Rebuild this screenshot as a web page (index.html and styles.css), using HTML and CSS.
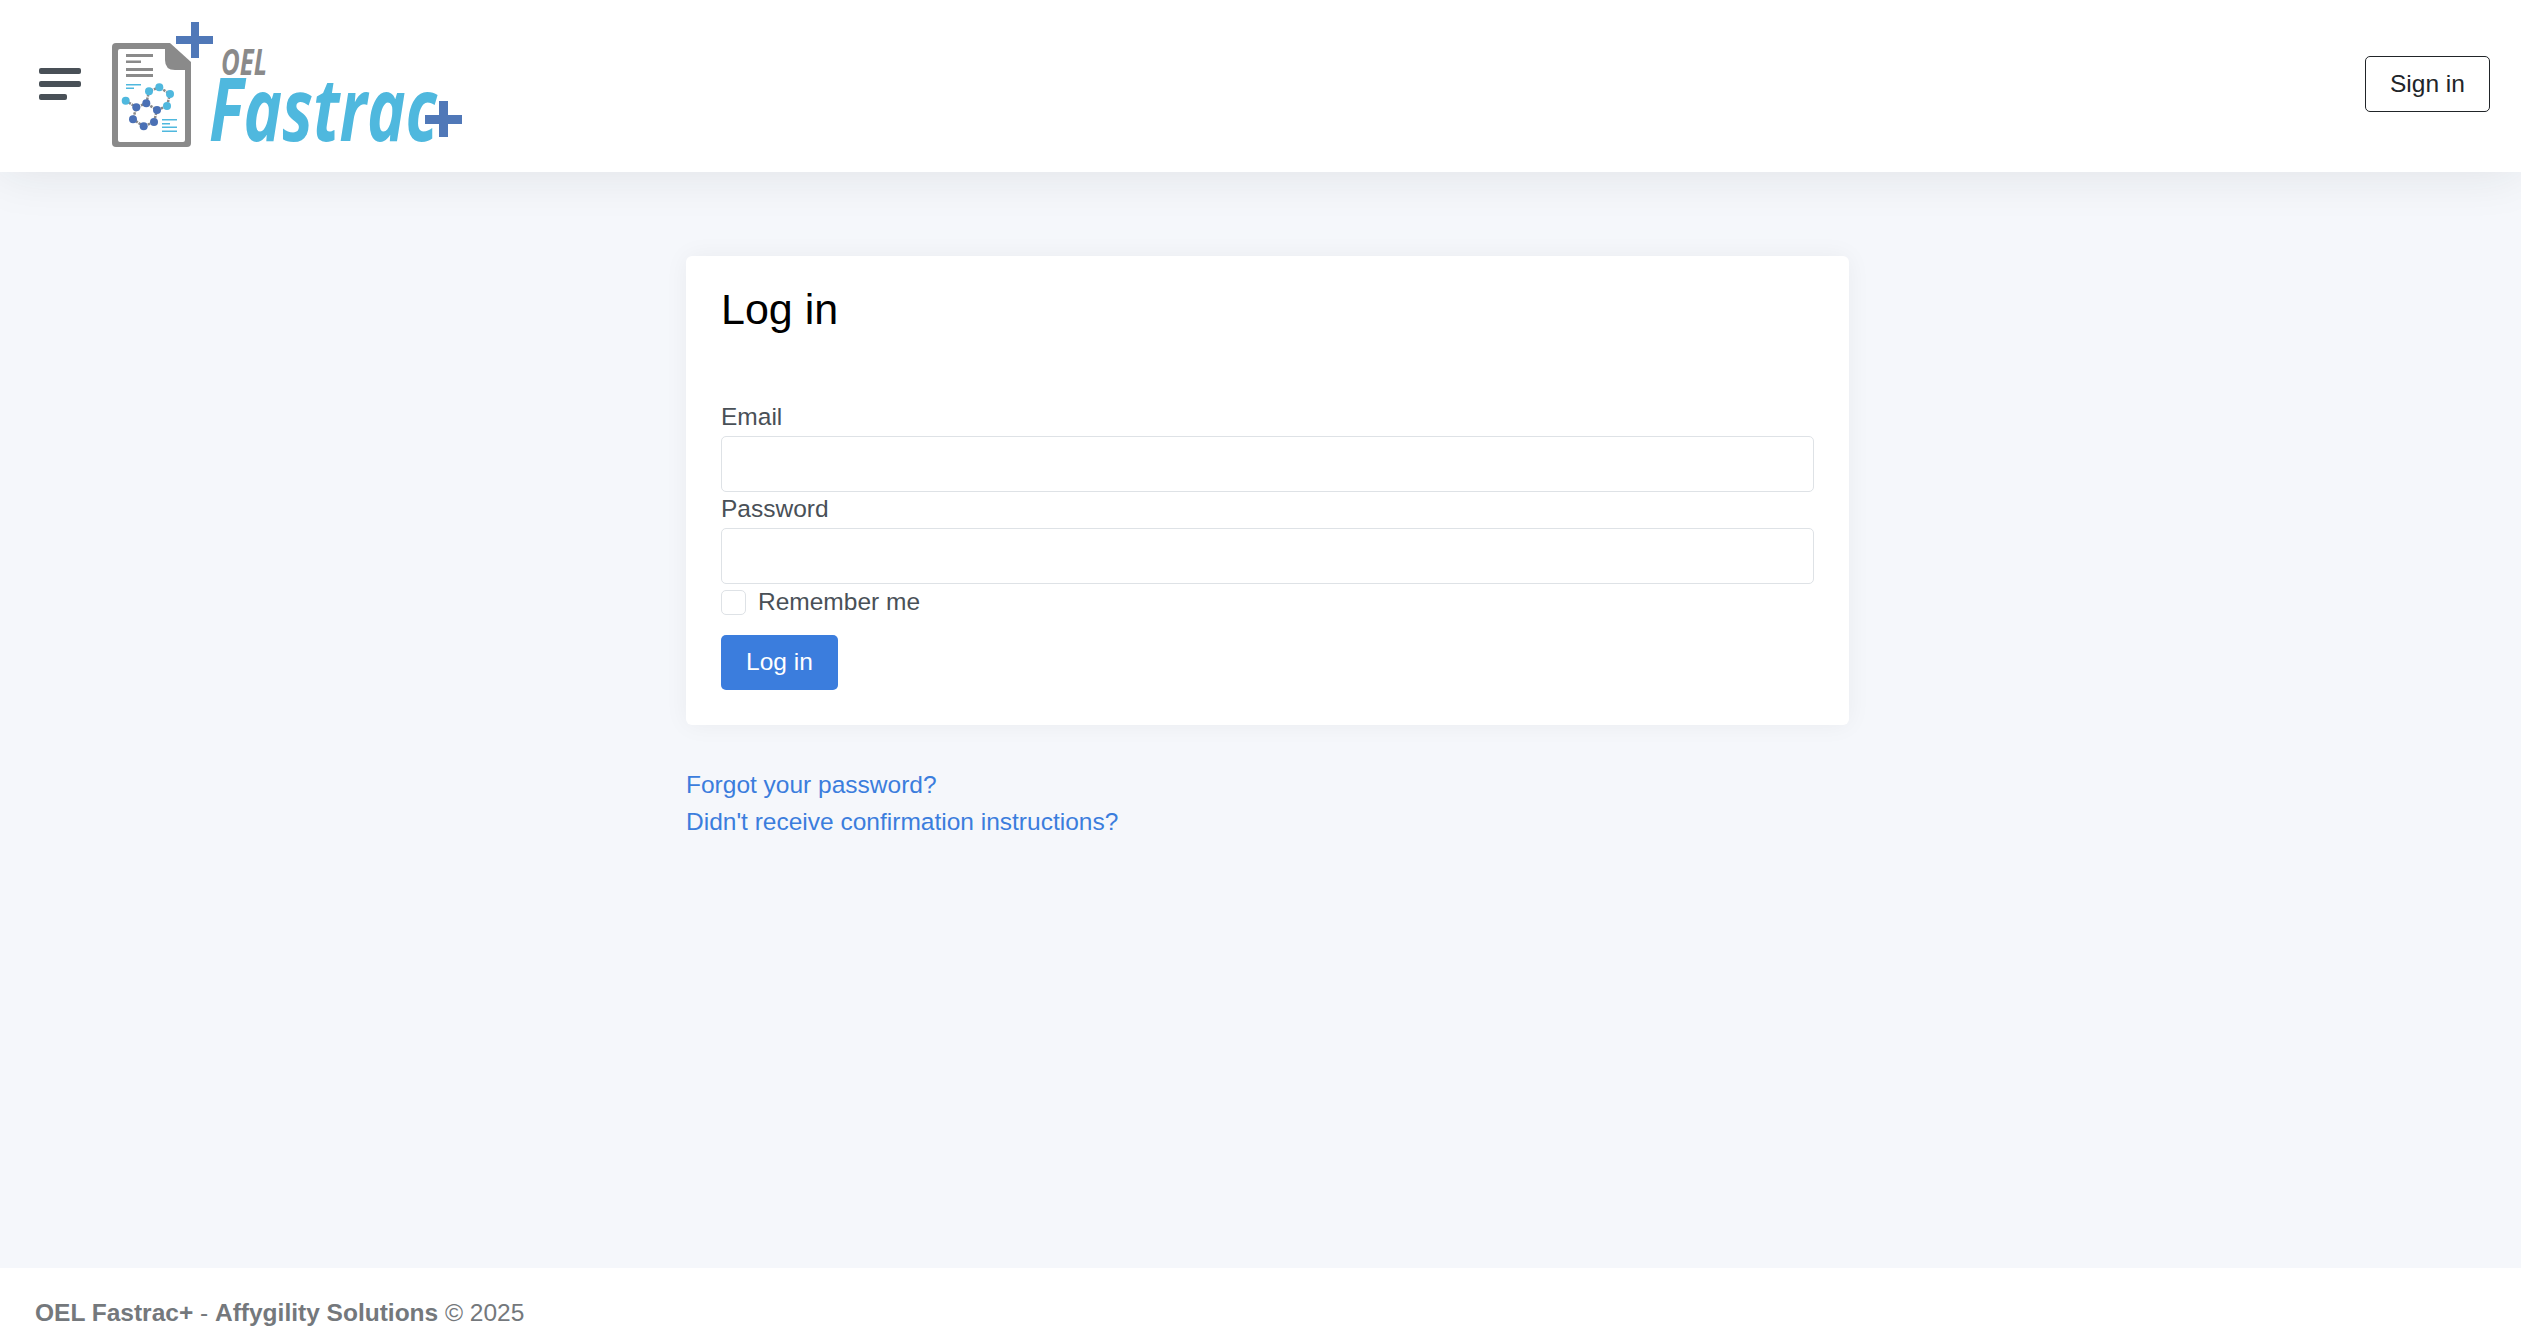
FILE: index.html
```html
<!DOCTYPE html>
<html lang="en">
<head>
    <meta charset="UTF-8">
    <meta name="viewport" content="width=device-width, initial-scale=1.0">
    <title>Log in - OEL Fastrac+</title>
    <link rel="stylesheet" href="styles.css">
</head>
<body>
    <header class="navbar">
        <a class="hamburger" href="#" aria-label="Menu">
            <span class="bar"></span>
            <span class="bar"></span>
            <span class="bar bar--short"></span>
        </a>
        <a class="logo" href="#" aria-label="OEL Fastrac+">
            <svg width="360" height="130" viewBox="108 19 360 130" overflow="visible">
                <!-- document -->
                <path d="M116 43H170L191 62V143Q191 147 187 147H116Q112 147 112 143V47Q112 43 116 43Z" fill="#8a8a8a"/>
                <path d="M120 49H165V60Q165 70 175 70H185V140Q185 142 183 142H120Q118 142 118 140V51Q118 49 120 49Z" fill="#fff"/>
                <g fill="#8a8a8a">
                    <rect x="126" y="54" width="27" height="3"/>
                    <rect x="126" y="60.500" width="15" height="2.500"/>
                    <rect x="126" y="68" width="27" height="3"/>
                    <rect x="126" y="74" width="27" height="3"/>
                </g>
                <g fill="#4fb8de">
                    <rect x="126" y="84" width="15" height="1.500"/>
                    <rect x="126" y="87.500" width="8" height="1.500"/>
                    <rect x="162" y="119" width="15" height="1.500"/>
                    <rect x="162" y="123" width="8" height="1.500"/>
                    <rect x="162" y="126.500" width="15" height="1.500"/>
                    <rect x="162" y="130.500" width="15" height="1.500"/>
                </g>
                <!-- molecule -->
                <path class="bonds" d="M125.700 100.700L136.300 107.300L146.300 103.300L157 110L154 122L143.700 126.300L133 119.300L136.300 107.300M146.300 103.300L149 91.300L159.300 87.300L170 94L167 106L157 110"/>
                <g fill="#4fb8de">
                    <circle cx="125.700" cy="100.700" r="4"/>
                    <circle cx="149" cy="91.300" r="4"/>
                    <circle cx="159.300" cy="87.300" r="4"/>
                    <circle cx="170" cy="94" r="4"/>
                    <circle cx="167" cy="106" r="4"/>
                </g>
                <g fill="#4a70b5">
                    <circle cx="136.300" cy="107.300" r="4"/>
                    <circle cx="146.300" cy="103.300" r="4"/>
                    <circle cx="157" cy="110" r="4"/>
                    <circle cx="154" cy="122" r="4"/>
                    <circle cx="143.700" cy="126.300" r="4"/>
                    <circle cx="133" cy="119.300" r="4"/>
                </g>
                <path d="M191 22H199V36H213V44H199V58H191V44H176V36H191Z" fill="#5078b8"/>
                <!-- wordmark -->
                <text class="logo__oel" x="221" y="75" textLength="46" lengthAdjust="spacingAndGlyphs">OEL</text>
                <text class="logo__name" x="209" y="141" textLength="228" lengthAdjust="spacingAndGlyphs">Fastrac</text>
                <path d="M439 101H448V115H462V124H448V137H439V124H425V115H439Z" fill="#5078b8"/>
            </svg>
        </a>
        <a class="btn btn--outline" href="#">Sign in</a>
    </header>

    <main class="content">
        <div class="card">
            <h1 class="card__title">Log in</h1>
            <form>
                <label class="field__label" for="email">Email</label>
                <input class="field__input" id="email" type="email">
                <label class="field__label" for="password">Password</label>
                <input class="field__input" id="password" type="password">
                <label class="remember">
                    <input class="remember__box" type="checkbox">
                    <span>Remember me</span>
                </label>
                <button class="btn btn--primary" type="button">Log in</button>
            </form>
        </div>
        <div class="links">
            <a href="#">Forgot your password?</a><br>
            <a href="#">Didn't receive confirmation instructions?</a>
        </div>
    </main>

    <footer class="footer">
        <strong>OEL Fastrac+</strong>&nbsp;-&nbsp;<strong>Affygility Solutions</strong>&nbsp;© 2025
    </footer>
</body>
</html>
```

FILE: styles.css
```css
* {
    box-sizing: border-box;
}
html, body {
    height: 100%;
}
body {
    margin: 0;
    display: flex;
    flex-direction: column;
    min-height: 100vh;
    background-color: #f5f7fb;
    color: #495057;
    font-family: "Liberation Sans", Arial, sans-serif;
    font-size: 24.500px;
    line-height: 36px;
}
a {
    color: #3b7ddd;
    text-decoration: none;
}

/* top bar */
.navbar {
    display: flex;
    align-items: center;
    flex-shrink: 0;
    height: 172px;
    padding: 0 31px 4px 39px;
    background-color: #fff;
    box-shadow: 0 0 48px rgba(33, 37, 41, .1);
}
.hamburger {
    display: flex;
    flex-direction: column;
    gap: 7px;
    width: 42px;
    margin-right: 27px;
}
.bar {
    display: block;
    width: 42px;
    height: 6px;
    border-radius: 2px;
    background-color: #495057;
}
.bar--short {
    width: 28px;
}
.logo {
    display: flex;
}
.logo__oel {
    fill: #8a8a8a;
    font-family: "Open Sans", sans-serif;
    font-size: 35px;
    font-style: italic;
    font-weight: 700;
}
.logo__name {
    fill: #4fb8de;
    font-family: "Open Sans", sans-serif;
    font-size: 87px;
    font-style: italic;
    font-weight: 700;
}
.bonds {
    fill: none;
    stroke: #8a8a8a;
    stroke-width: 2.500;
    stroke-dasharray: 2.500 1;
}

/* buttons */
.btn {
    display: inline-block;
    border: 1px solid transparent;
    border-radius: 5px;
    font-family: inherit;
    font-size: 24.500px;
    line-height: 36px;
    text-align: center;
}
.btn--outline {
    margin-left: auto;
    width: 125px;
    height: 56px;
    padding: 9px 0;
    border-color: #212529;
    color: #212529;
}
.btn--primary {
    display: block;
    width: 117px;
    height: 55px;
    padding: 0 0 2px;
    background-color: #3b7ddd;
    color: #fff;
}

/* login card */
.content {
    flex: 1;
    width: 1163px;
    margin: 0 auto;
    padding-top: 84px;
    position: relative;
    left: 7px;
}
.card {
    padding: 35px;
    border-radius: 6px;
    background-color: #fff;
    box-shadow: 0 0 1.500rem rgba(33, 37, 41, .05);
}
.card__title {
    margin: 0 0 73px;
    color: #000;
    font-size: 43px;
    font-weight: 400;
    line-height: 36px;
}
.field__label {
    display: block;
    margin: -1px 0 1px;
}
.field__input {
    display: block;
    width: 100%;
    height: 56px;
    border: 1px solid #dee2e6;
    border-radius: 5px;
    background-color: #fff;
    outline: none;
}
.remember {
    display: flex;
    align-items: center;
    gap: 12px;
    margin-bottom: 15px;
}
.remember__box {
    appearance: none;
    width: 25px;
    height: 25px;
    margin: 0;
    border: 1px solid #dee2e6;
    border-radius: 5px;
    background-color: #fff;
}

.links {
    margin-top: 41px;
    line-height: 37px;
}

.footer {
    flex-shrink: 0;
    height: 70px;
    padding: 27px 35px 0;
    background-color: #fff;
    color: #74787c;
    line-height: 36px;
}
```
